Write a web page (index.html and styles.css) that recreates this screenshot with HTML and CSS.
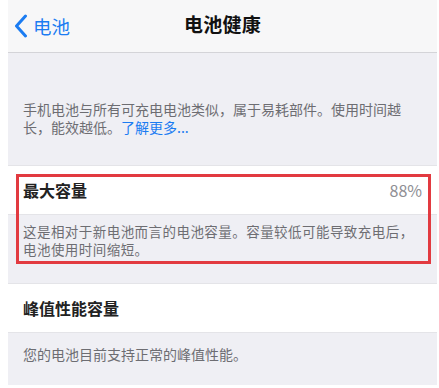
FILE: index.html
```html
<!DOCTYPE html>
<html lang="zh-CN">
<head>
<meta charset="utf-8">
<title>电池健康</title>
<link rel="stylesheet" href="styles.css">
</head>
<body>
<div class="screen">
  <header class="nav">
    <a class="back">
      <svg class="chev" width="14" height="24" viewBox="0 0 14 24"><path d="M11.5 2 L2.5 12 L11.5 22" fill="none" stroke="#1b7cf2" stroke-width="3" stroke-linecap="round" stroke-linejoin="round"/></svg>
      <span>电池</span>
    </a>
    <h1 class="title">电池健康</h1>
  </header>
  <p class="intro">手机电池与所有可充电电池类似，属于易耗部件。使用时间越长，能效越低。<span class="link">了解更多...</span></p>
  <section class="group">
    <div class="row">
      <span class="label">最大容量</span>
      <span class="value">88%</span>
    </div>
    <p class="note note-first">这是相对于新电池而言的电池容量。容量较低可能导致充电后，电池使用时间缩短。</p>
    <div class="highlight"></div>
  </section>
  <section class="group">
    <div class="row">
      <span class="label">峰值性能容量</span>
    </div>
    <p class="note note-last">您的电池目前支持正常的峰值性能。</p>
  </section>
</div>
</body>
</html>
```

FILE: styles.css
```css
* { box-sizing: border-box; }
html, body { margin: 0; padding: 0; background: #fff; }
body {
  font-family: "Noto Sans CJK SC", "Noto Sans", sans-serif;
  padding: 0 2px 3px 8px;
}
.screen {
  width: 429px;
  background: #efeff4;
}
.nav {
  height: 53px;
  background: #f7f7f8;
  border-bottom: 1px solid #d4d4d8;
  position: relative;
  display: flex;
  align-items: center;
  justify-content: center;
}
.back {
  position: absolute;
  left: 6px;
  top: 14px;
  display: flex;
  align-items: center;
  gap: 5px;
  color: #1b7cf2;
  font-size: 18.5px;
  line-height: 24px;
}
.chev { display: block; }
.title {
  margin: 0;
  font-size: 19px;
  font-weight: 600;
  color: #111;
  line-height: 24px;
  margin-top: -5px;
  letter-spacing: 0.3px;
}
.intro {
  margin: 0;
  padding: 47px 16px 29px 15px;
  font-size: 14px;
  line-height: 18px;
  color: #6d6d72;
}
.link { color: #1b7cf2; }
.group { position: relative; }
.row {
  height: 50px;
  background: #fff;
  border-top: 1px solid #e4e4e8;
  border-bottom: 1px solid #e4e4e8;
  display: flex;
  align-items: center;
  justify-content: space-between;
  padding: 0 15px;
}
.label {
  font-size: 16px;
  font-weight: 600;
  color: #222;
}
.value {
  font-size: 16px;
  color: #8e8e93;
}
.note {
  margin: 0;
  font-size: 13.5px;
  line-height: 18px;
  color: #6d6d72;
  padding: 0 20px 0 15px;
}
.note-first { padding-top: 7px; padding-bottom: 25px; letter-spacing: 0.45px; }
.note-last { padding-top: 12px; padding-bottom: 22px; font-size: 14px; }
.highlight {
  position: absolute;
  left: 8px;
  top: 9px;
  width: 415px;
  height: 90px;
  border: 3px solid #e23a40;
}
```
